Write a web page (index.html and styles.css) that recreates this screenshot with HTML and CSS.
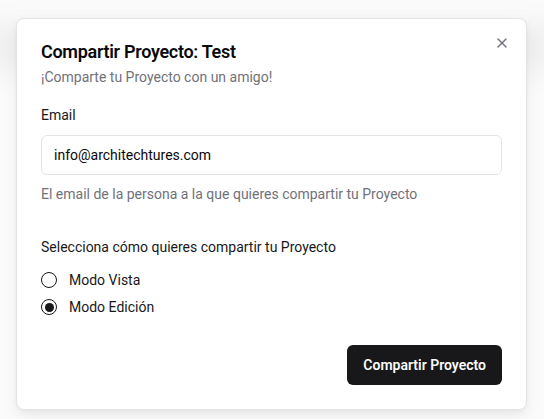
FILE: index.html
```html
<!DOCTYPE html>
<html>
<head>
    <title>Compartir Proyecto</title>
    <meta name="viewport" content="width=device-width, initial-scale=1.0">
    <link rel="stylesheet" href="styles.css">
</head>
<body>
    <!-- Fondo difuminado de la página -->
    <div class="backdrop"></div>

    <!-- Diálogo -->
    <div class="dialog">
        <button class="dialog-close" aria-label="Cerrar">
            <svg width="16" height="16" viewBox="0 0 24 24" fill="none" stroke="currentColor" stroke-width="2" stroke-linecap="round" stroke-linejoin="round">
                <path d="M18 6 6 18"></path>
                <path d="m6 6 12 12"></path>
            </svg>
        </button>

        <div class="dialog-header">
            <h2 class="dialog-title">Compartir Proyecto: Test</h2>
            <p class="dialog-description">¡Comparte tu Proyecto con un amigo!</p>
        </div>

        <div class="field">
            <label class="label" for="email">Email</label>
            <input class="input" id="email" type="email" value="info@architechtures.com">
            <p class="hint">El email de la persona a la que quieres compartir tu Proyecto</p>
        </div>

        <div class="field mode-field">
            <span class="label">Selecciona cómo quieres compartir tu Proyecto</span>
            <div class="radio-group">
                <label class="radio-item">
                    <span class="radio"></span>
                    Modo Vista
                </label>
                <label class="radio-item">
                    <span class="radio checked"></span>
                    Modo Edición
                </label>
            </div>
        </div>

        <div class="dialog-footer">
            <button class="btn-primary">Compartir Proyecto</button>
        </div>
    </div>
</body>
</html>
```

FILE: styles.css
```css
body {
    margin: 0;
    padding: 18px 16px 0 16px;
    background-color: #fbfbfb;
    color: #09090b;
    font-family: Roboto, 'Noto Sans', sans-serif;
    height: 419px;
    box-sizing: border-box;
    overflow: hidden;
    position: relative;
}

/* Fondo */
.backdrop {
    position: absolute;
    left: -20px;
    right: -20px;
    top: 22px;
    height: 50px;
    background: #ebebeb;
    filter: blur(14px);
    opacity: 0.7;
}

/* Diálogo */
.dialog {
    position: relative;
    width: 511px;
    height: 392px;
    box-sizing: border-box;
    padding: 24px;
    background: #fff;
    border: 1px solid #e4e4e7;
    border-radius: 8px;
    box-shadow: 0 8px 16px rgba(0, 0, 0, 0.06), 0 2px 4px rgba(0, 0, 0, 0.04);
    display: flex;
    flex-direction: column;
}

.dialog-close {
    position: absolute;
    top: 16px;
    right: 16px;
    padding: 0;
    width: 16px;
    height: 16px;
    border: none;
    background: none;
    color: #71717a;
    cursor: pointer;
}

.dialog-close svg {
    display: block;
}

.dialog-header {
    display: flex;
    flex-direction: column;
    gap: 6px;
}

.dialog-title {
    margin: 0;
    font-size: 18px;
    line-height: 18px;
    font-weight: 600;
    letter-spacing: -0.3px;
}

.dialog-description {
    margin: 0;
    font-size: 14px;
    line-height: 20px;
    color: #71717a;
}

/* Campos */
.field {
    display: flex;
    flex-direction: column;
    margin-top: 18px;
}

.label {
    font-size: 14px;
    line-height: 20px;
    font-weight: 400;
    color: #18181b;
}

.input {
    margin-top: 10px;
    height: 40px;
    box-sizing: border-box;
    padding: 0 12px;
    border: 1px solid #e4e4e7;
    border-radius: 6px;
    font-family: Roboto, 'Noto Sans', sans-serif;
    font-size: 14px;
    color: #09090b;
    background: #fff;
}

.input:focus {
    outline: none;
}

.hint {
    margin: 9px 0 0;
    font-size: 14px;
    line-height: 20px;
    color: #71717a;
}

.mode-field {
    margin-top: 33px;
}

/* Radios */
.radio-group {
    display: flex;
    flex-direction: column;
    gap: 7px;
    margin-top: 13px;
}

.radio-item {
    display: flex;
    align-items: center;
    gap: 12px;
    height: 20px;
    font-size: 14px;
    font-weight: 400;
    color: #18181b;
    cursor: pointer;
}

.radio {
    width: 16px;
    height: 16px;
    box-sizing: border-box;
    border: 1px solid #18181b;
    border-radius: 50%;
    display: flex;
    align-items: center;
    justify-content: center;
}

.radio.checked::after {
    content: '';
    width: 9px;
    height: 9px;
    border-radius: 50%;
    background: #18181b;
}

/* Footer */
.dialog-footer {
    margin-top: auto;
    display: flex;
    justify-content: flex-end;
}

.btn-primary {
    height: 40px;
    padding: 0 16px;
    background: #18181b;
    color: #fafafa;
    border: none;
    border-radius: 6px;
    font-family: Roboto, 'Noto Sans', sans-serif;
    font-size: 14px;
    font-weight: 600;
    cursor: pointer;
}
```
